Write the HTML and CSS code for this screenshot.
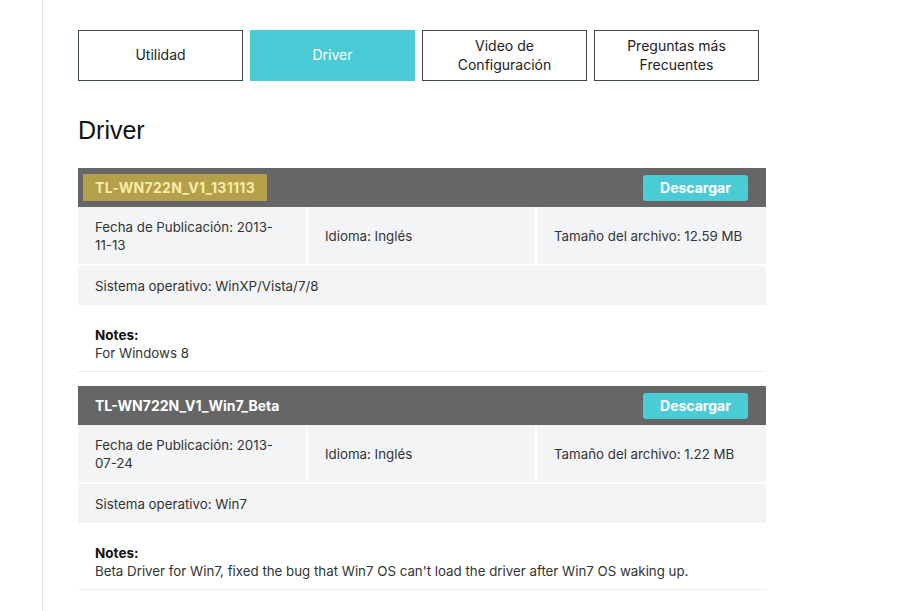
FILE: index.html
```html
<!DOCTYPE html>
<html lang="es">
<head>
<meta charset="utf-8">
<title>Driver</title>
<link rel="stylesheet" href="styles.css">
</head>
<body>
<div class="page">
  <div class="tabs">
    <div class="tab">Utilidad</div>
    <div class="tab active">Driver</div>
    <div class="tab">Video de<br>Configuración</div>
    <div class="tab">Preguntas más<br>Frecuentes</div>
  </div>
  <h2 class="title">Driver</h2>

  <div class="block">
    <div class="head">
      <span class="name mark">TL-WN722N_V1_131113</span>
      <span class="btn">Descargar</span>
    </div>
    <div class="grid">
      <div class="cell date">Fecha de Publicación: 2013-11-13</div>
      <div class="cell">Idioma: Inglés</div>
      <div class="cell">Tamaño del archivo: 12.59 MB</div>
      <div class="cell wide">Sistema operativo: WinXP/Vista/7/8</div>
    </div>
    <div class="notes">
      <div class="notes-label">Notes:</div>
      <div>For Windows 8</div>
    </div>
  </div>

  <div class="block">
    <div class="head">
      <span class="name">TL-WN722N_V1_Win7_Beta</span>
      <span class="btn">Descargar</span>
    </div>
    <div class="grid">
      <div class="cell date">Fecha de Publicación: 2013-07-24</div>
      <div class="cell">Idioma: Inglés</div>
      <div class="cell">Tamaño del archivo: 1.22 MB</div>
      <div class="cell wide">Sistema operativo: Win7</div>
    </div>
    <div class="notes">
      <div class="notes-label">Notes:</div>
      <div>Beta Driver for Win7, fixed the bug that Win7 OS can't load the driver after Win7 OS waking up.</div>
    </div>
  </div>
</div>
</body>
</html>
```

FILE: styles.css
```css
html, body {
  margin: 0;
  padding: 0;
  background: #fff;
}
body {
  font-family: Inter, "Noto Sans", sans-serif;
  font-size: 13.3px;
  color: #333;
}
.page {
  margin-left: 42px;
  border-left: 1px solid #e6e6e6;
  padding: 30px 0 20px 35px;
  min-height: 611px;
  box-sizing: border-box;
  width: 724px;
}
.tabs {
  display: flex;
  gap: 7px;
}
.tab {
  width: 165px;
  height: 51px;
  box-sizing: border-box;
  border: 1px solid #3d4b54;
  padding-bottom: 2px;
  display: flex;
  align-items: center;
  justify-content: center;
  text-align: center;
  line-height: 19px;
  color: #222;
  font-size: 14px;
}
.tab.active {
  background: #4bcbd6;
  border-color: #4bcbd6;
  color: #fff;
}
.title {
  font-family: "Liberation Sans", Arial, sans-serif;
  font-weight: normal;
  font-size: 25px;
  line-height: 29px;
  color: #111;
  margin: 35px 0 23px;
}
.block {
  width: 688px;
  margin-bottom: 14px;
}
.head {
  background: #666;
  height: 39px;
  display: flex;
  align-items: center;
  justify-content: space-between;
  padding: 0 18px 0 17px;
}
.name {
  font-weight: bold;
  color: #fff;
  font-size: 14px;
}
.name.mark {
  background: #b4a04b;
  color: #f7eca9;
  margin-left: -12px;
  padding: 0 12px 0 12px;
  letter-spacing: 0.3px;
  height: 27px;
  line-height: 27px;
  display: inline-block;
}
.btn {
  background: #4bcbd6;
  color: #fff;
  font-weight: bold;
  width: 105px;
  height: 26px;
  line-height: 26px;
  text-align: center;
  border-radius: 3px;
  font-size: 14px;
}
.grid {
  display: grid;
  grid-template-columns: 228px 227px 229px;
  gap: 2px;
}
.cell {
  background: #f3f4f6;
  padding: 10.5px 17px;
  line-height: 18px;
  display: flex;
  align-items: center;
}
.cell.date {
  padding-right: 30px;
}
.cell.wide {
  grid-column: 1 / 4;
}
.notes {
  padding: 21px 17px 9px;
  line-height: 18px;
  border-bottom: 1px solid #ebebeb;
}
.notes-label {
  font-weight: bold;
  color: #111;
  font-size: 13.5px;
}
```
